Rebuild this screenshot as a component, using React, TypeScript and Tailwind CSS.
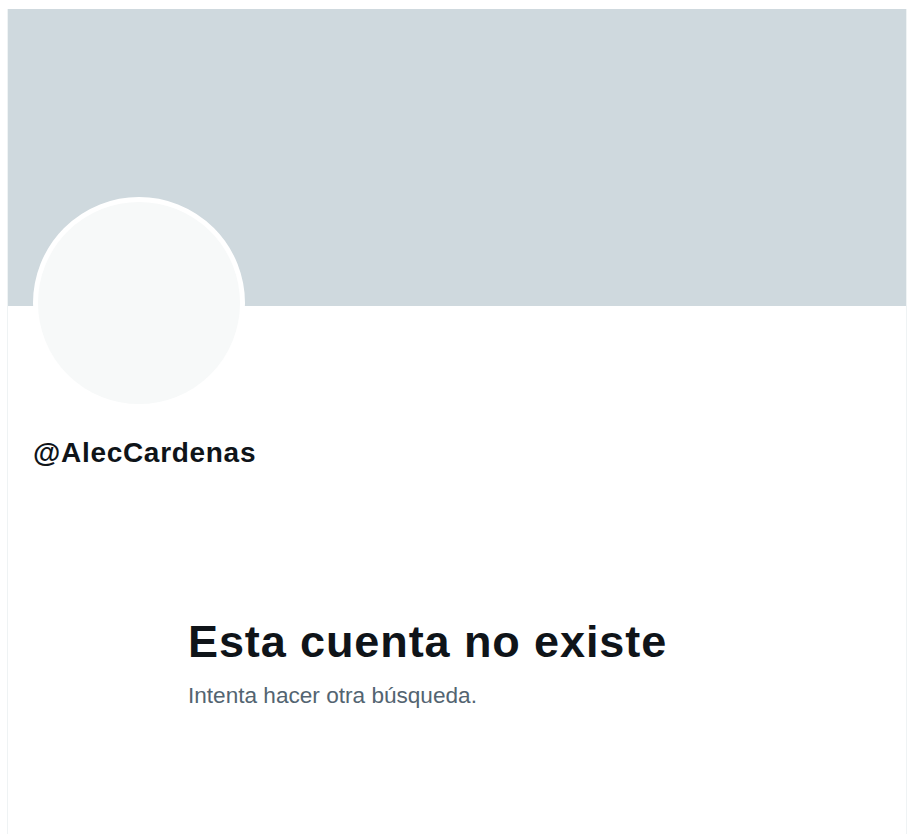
import React from "react";

const App = () => {
  return (
    <div className="min-h-[834px] bg-white pt-[9px] pl-[7px] font-['Liberation_Sans',Arial,sans-serif]">
      <div className="w-[900px] min-h-[825px] border-x border-[#eff3f4] flex flex-col">
        <div className="h-[297px] bg-[#cfd9de]" />
        <div className="px-[25px] flex flex-col">
          <div className="-mt-[109px] w-[212px] h-[212px] rounded-full border-[5px] border-white bg-[#f7f9f9]" />
          <div className="mt-[28px] text-[28px] leading-[32px] font-bold tracking-[0.7px] text-[#0f1419]">
            @AlecCardenas
          </div>
        </div>
        <div className="pl-[180px] mt-[147px] flex flex-col gap-[14px]">
          <h1 className="text-[45px] leading-[52px] font-bold tracking-[0.9px] text-[#0f1419]">
            Esta cuenta no existe
          </h1>
          <p className="text-[22.6px] leading-[28px] text-[#536471]">
            Intenta hacer otra búsqueda.
          </p>
        </div>
      </div>
    </div>
  );
};

export default App;
